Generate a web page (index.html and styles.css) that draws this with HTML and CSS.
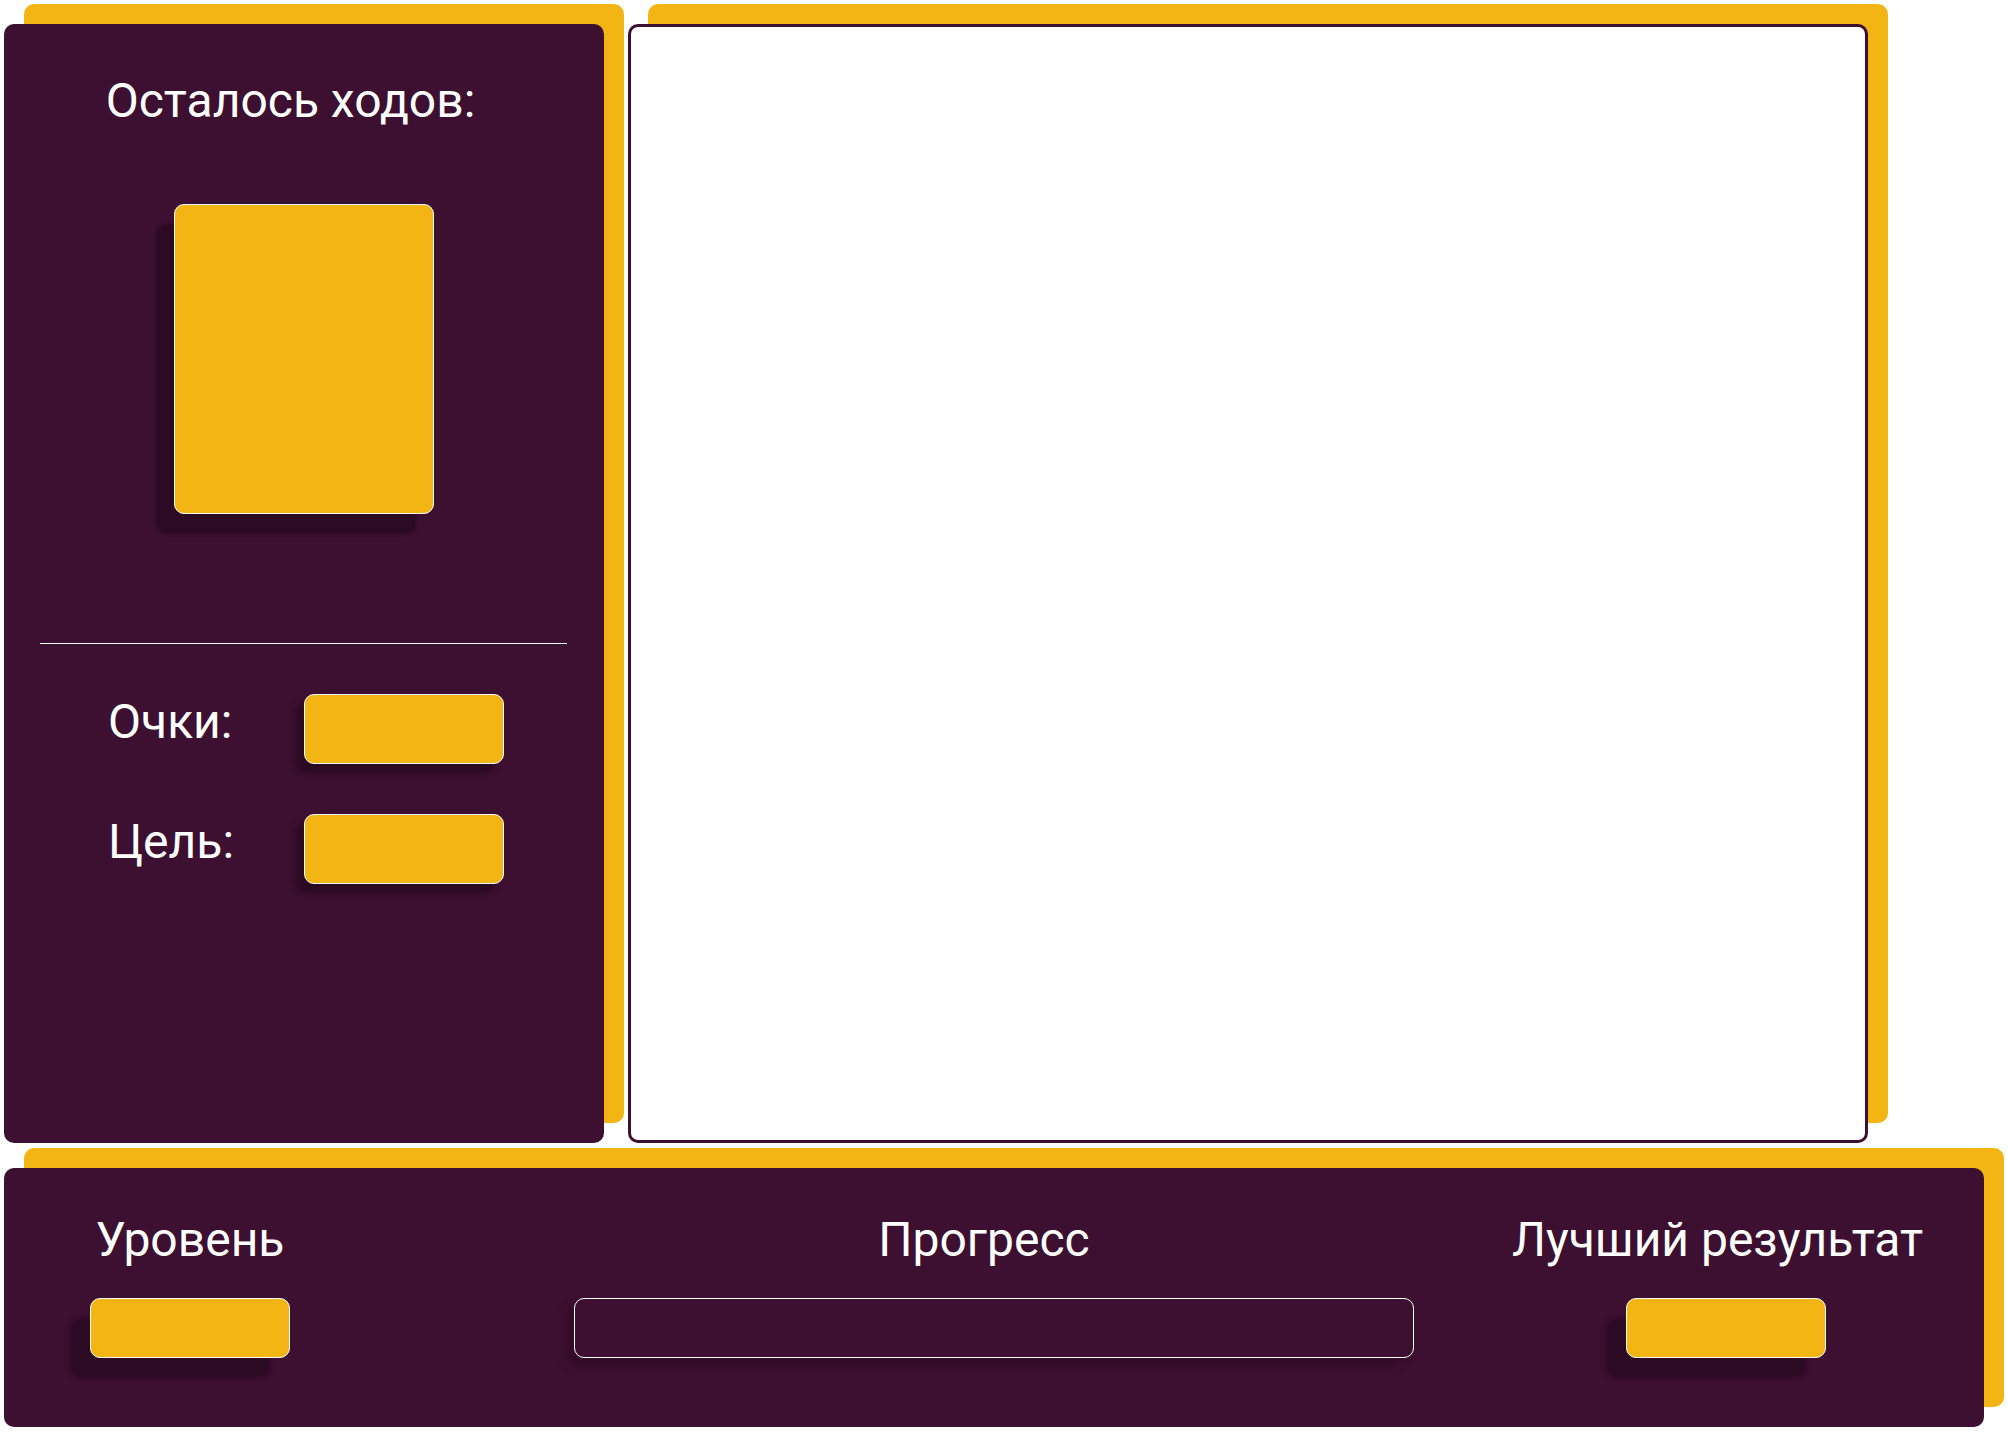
FILE: index.html
```html
<!DOCTYPE html>
<html lang="ru">
<head>
<meta charset="utf-8">
<title>Игра</title>
<link rel="stylesheet" href="styles.css">
</head>
<body>
<div class="page">
  <div class="top-row">
    <aside class="side panel">
      <div class="moves-title">Осталось ходов:</div>
      <div class="moves-box"></div>
      <div class="divider"></div>
      <div class="stat-row">
        <div class="stat-label">Очки:</div>
        <div class="stat-box"></div>
      </div>
      <div class="stat-row">
        <div class="stat-label">Цель:</div>
        <div class="stat-box"></div>
      </div>
    </aside>
    <main class="board"></main>
  </div>
  <footer class="bottom panel">
    <div class="col col-level">
      <div class="col-title">Уровень</div>
      <div class="value-box"></div>
    </div>
    <div class="col col-progress">
      <div class="col-title shift-left">Прогресс</div>
      <div class="progress-bar"></div>
    </div>
    <div class="col col-best">
      <div class="col-title">Лучший результат</div>
      <div class="value-box shift-right"></div>
    </div>
  </footer>
</div>
</body>
</html>
```

FILE: styles.css
```css
* { box-sizing: border-box; }

html, body {
  margin: 0;
  padding: 0;
  background: #ffffff;
}

body {
  font-family: Roboto, "Noto Sans", "Liberation Sans", sans-serif;
  color: #ffffff;
}

.page {
  width: 2008px;
  height: 1432px;
  padding: 24px 0 0 4px;
}

.panel {
  background: #3d0f31;
  border-radius: 10px;
  box-shadow: 20px -20px 0 #f2b513;
}

.top-row {
  display: flex;
  gap: 24px;
  height: 1119px;
}

.side {
  width: 600px;
  height: 1119px;
  padding: 49px 37px 0 36px;
  display: flex;
  flex-direction: column;
}

.moves-title {
  font-size: 48px;
  line-height: 56px;
  text-align: center;
  margin-right: 26px;
  white-space: nowrap;
}

.moves-box {
  width: 260px;
  height: 310px;
  margin: 75px auto 0;
  background: #f2b513;
  border: 1px solid #ffffff;
  border-radius: 10px;
  box-shadow: -18px 20px 3px #2c0a24;
}

.divider {
  height: 1px;
  background: #ffffff;
  margin: 129px 0 0 0;
}

.stat-row {
  display: flex;
  align-items: flex-start;
  margin-top: 50px;
  padding-left: 68px;
}

.stat-label {
  width: 196px;
  font-size: 48px;
  line-height: 56px;
  white-space: nowrap;
}

.stat-box {
  width: 200px;
  height: 70px;
  background: #f2b513;
  border: 1px solid #ffffff;
  border-radius: 10px;
  box-shadow: -9px 9px 6px #2c0a24;
}

.board {
  width: 1240px;
  height: 1119px;
  background: #ffffff;
  border: 3px solid #3d0f31;
  border-radius: 10px;
  box-shadow: 20px -20px 0 #f2b513;
}

.bottom {
  width: 1980px;
  height: 259px;
  margin-top: 25px;
  display: flex;
  align-items: flex-start;
  padding: 44px 0 0 86px;
}

.col {
  display: flex;
  flex-direction: column;
  align-items: center;
}

.col-level { width: 200px; }

.col-progress {
  width: 840px;
  margin-left: 284px;
}

.col-best {
  margin-left: 98px;
}

.col-title {
  font-size: 48px;
  line-height: 56px;
  white-space: nowrap;
}

.shift-left { margin-right: 20px; }
.shift-right { margin-left: 16px; }

.value-box {
  width: 200px;
  height: 60px;
  margin-top: 30px;
  background: #f2b513;
  border: 1px solid #ffffff;
  border-radius: 10px;
  box-shadow: -20px 20px 4px #2c0a24;
}

.progress-bar {
  width: 840px;
  height: 60px;
  margin-top: 30px;
  border: 1px solid #ffffff;
  border-radius: 10px;
  box-shadow: -8px 8px 10px rgba(20, 0, 14, 0.25);
}
```
